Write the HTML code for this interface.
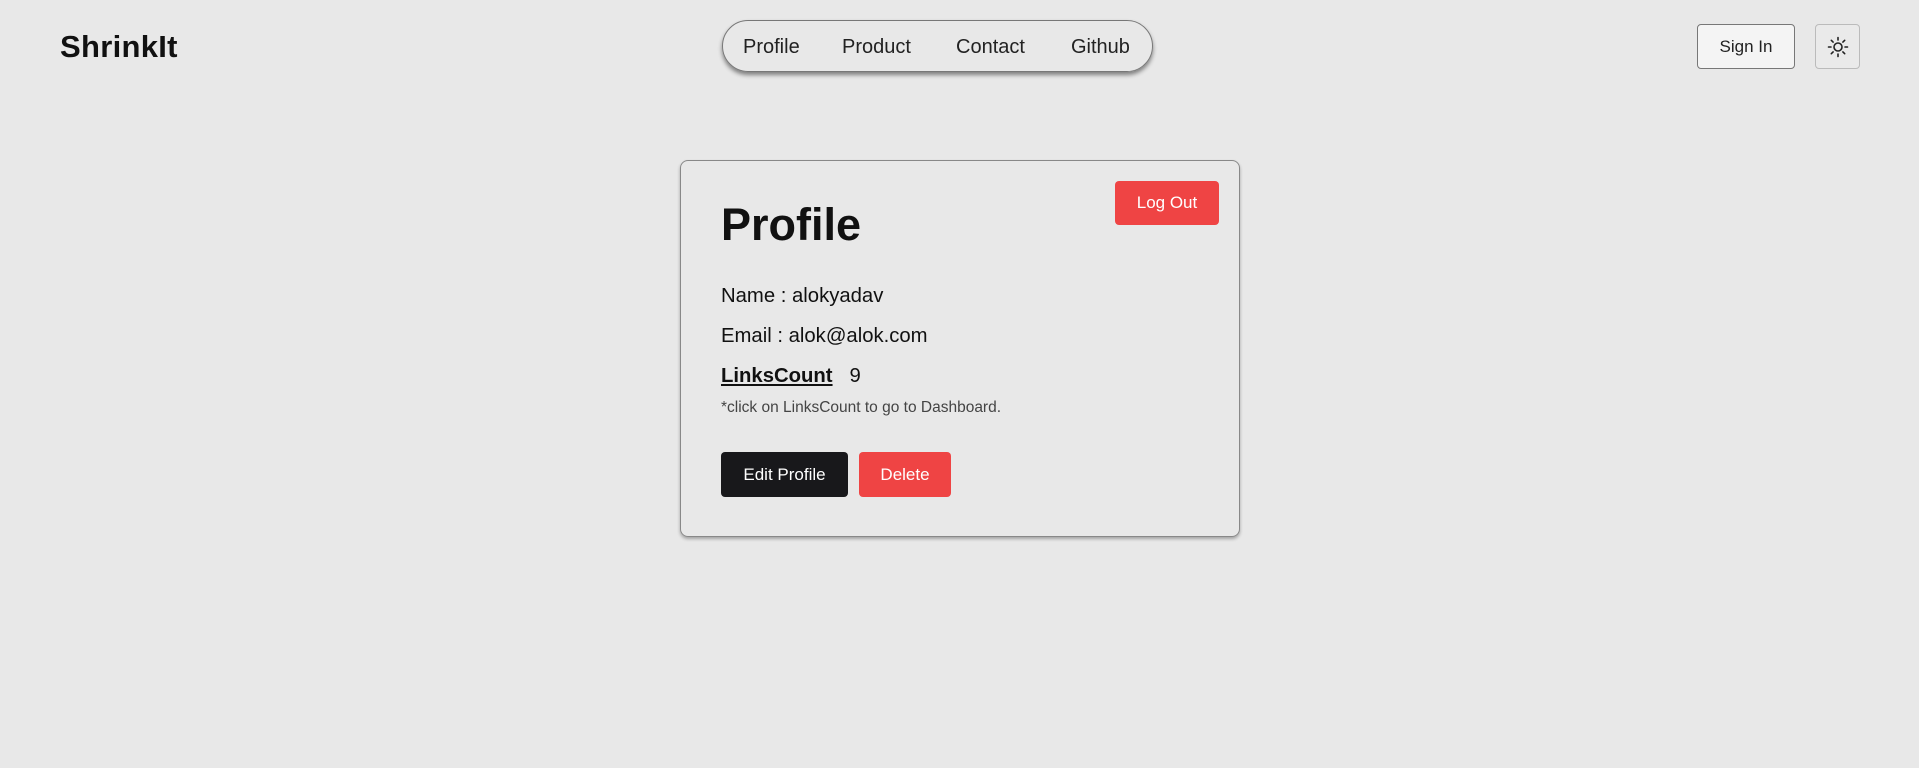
<!DOCTYPE html>
<html><head><meta charset="utf-8"><style>
*{box-sizing:border-box;margin:0;padding:0}
body{width:1919px;height:768px;background:#e8e8e8;font-family:"Liberation Sans",sans-serif;color:#111;position:relative;overflow:hidden}
.abs{position:absolute}
.logo{left:60px;top:29px;font-size:31px;font-weight:bold;letter-spacing:0.3px}
.nav{left:722px;top:20px;width:431px;height:52px;border:1.5px solid #777;border-radius:26px;box-shadow:0 3px 4px rgba(0,0,0,.45);}
.nav span{position:absolute;top:15px;font-size:20px;color:#222}
.signin{left:1697px;top:24px;width:98px;height:45px;border:1px solid #777;border-radius:4px;background:#f4f4f4;font-size:17px;display:flex;align-items:center;justify-content:center;color:#222}
.theme{left:1815px;top:24px;width:45px;height:45px;border:1px solid #bbb;border-radius:4px;background:#eaeaea;display:flex;align-items:center;justify-content:center}
.card{left:680px;top:160px;width:560px;height:377px;border:1.5px solid #888;border-radius:8px;box-shadow:0 2px 3px rgba(0,0,0,.3)}
.btn{position:absolute;border-radius:4px;color:#fff;font-size:17px;display:flex;align-items:center;justify-content:center}
.red{background:#ef4444}
.t{position:absolute;left:40px;font-size:20.3px}
</style></head><body>
<div class="abs logo">ShrinkIt</div>
<div class="abs nav">
<span style="left:20px">Profile</span><span style="left:119px">Product</span><span style="left:233px">Contact</span><span style="left:348px">Github</span>
</div>
<div class="abs signin">Sign In</div>
<div class="abs theme"><svg width="24" height="24" viewBox="0 0 24 24" fill="none" stroke="#222" stroke-width="1.6" stroke-linecap="round"><circle cx="12" cy="12" r="4"/><path d="M12 2.5v2.5M12 19v2.5M2.5 12h2.5M19 12h2.5M5.3 5.3l1.8 1.8M16.9 16.9l1.8 1.8M5.3 18.7l1.8-1.8M16.9 7.1l1.8-1.8"/></svg></div>
<div class="abs card">
<div class="btn red" style="left:434px;top:20px;width:104px;height:44px">Log Out</div>
<div class="t" style="top:38px;font-size:45px;font-weight:bold">Profile</div>
<div class="t" style="top:124px">Name : alokyadav</div>
<div class="t" style="top:164px">Email : alok@alok.com</div>
<div class="t" style="top:204px"><b style="text-decoration:underline">LinksCount</b>&nbsp;&nbsp; 9</div>
<div class="t" style="top:238px;font-size:15.5px;color:#444">*click on LinksCount to go to Dashboard.</div>
<div class="btn" style="left:40px;top:291px;width:127px;height:45px;background:#18181b">Edit Profile</div>
<div class="btn red" style="left:178px;top:291px;width:92px;height:45px">Delete</div>
</div>
</body></html>
